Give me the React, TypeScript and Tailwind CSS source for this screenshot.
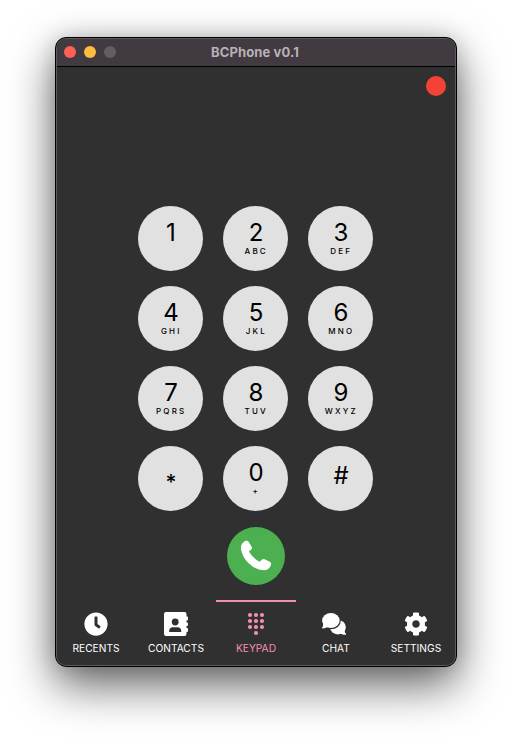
import type { ReactNode } from "react";
import { FaClock, FaCog } from "react-icons/fa";

type Key = { digit: string; letters: string; tone?: "symbol" | "star" };

const keys: Key[] = [
  { digit: "1", letters: "" },
  { digit: "2", letters: "ABC" },
  { digit: "3", letters: "DEF" },
  { digit: "4", letters: "GHI" },
  { digit: "5", letters: "JKL" },
  { digit: "6", letters: "MNO" },
  { digit: "7", letters: "PQRS" },
  { digit: "8", letters: "TUV" },
  { digit: "9", letters: "WXYZ" },
  { digit: "*", letters: "", tone: "star" },
  { digit: "0", letters: "+" },
  { digit: "#", letters: "", tone: "symbol" },
];

function DialKey({ digit, letters, tone }: Key) {
  const offset = tone === "star" ? "pt-[25px]" : tone === "symbol" ? "pt-[18px]" : "pt-[15px]";
  const size = tone === "star" ? "text-[21px] font-medium" : "text-[24px]";
  return (
    <button className={`flex h-[65px] w-[65px] flex-col items-center rounded-full bg-[#e1e1e1] text-black ${offset}`}>
      <span className={`pl-px leading-[24px] ${size}`}>{digit}</span>
      <span className="mt-px pl-[1.5px] text-[8px] leading-[10px] font-medium tracking-[2.2px]">{letters}</span>
    </button>
  );
}

function ContactBookIcon() {
  return (
    <svg viewBox="0 0 24 24" className="h-6 w-6" fill="currentColor">
      <path
        fillRule="evenodd"
        d="M2 0h18.500A2 2 0 0 1 22.500 2v2.500H23a1 1 0 0 1 1 1v2a1 1 0 0 1-1 1h-.5v2H23a1 1 0 0 1 1 1v1.500a1 1 0 0 1-1 1h-.5v2H23a1 1 0 0 1 1 1v2a1 1 0 0 1-1 1h-.5V22a2 2 0 0 1-2 2H2a2 2 0 0 1-2-2V2a2 2 0 0 1 2-2ZM11.200 6.600a3.400 3.400 0 1 0 0 6.800 3.400 3.400 0 0 0 0-6.800ZM5.200 19.900h12v-1.200c0-2-1.500-3.400-3.500-3.400h-5c-2 0-3.500 1.400-3.500 3.400Z"
      />
    </svg>
  );
}

function DialpadIcon() {
  return (
    <svg viewBox="0 0 24 24" className="h-6 w-6" fill="currentColor">
      {[3, 9, 15].map((y) => [6, 12, 18].map((x) => <circle key={`${x}-${y}`} cx={x} cy={y} r="2.1" />))}
      <circle cx="12" cy="21" r="2.1" />
    </svg>
  );
}

function ChatIcon() {
  return (
    <svg viewBox="0 0 24 24" className="mr-1 h-6 w-6" fill="currentColor">
      <ellipse cx="15.900" cy="15.200" rx="7.900" ry="7.200" />
      <path d="M22.800 17.500c-.3 2 .1 3.300 1.200 4.200v1.100c-2 .2-4-.2-5.500-1.200Z" />
      <ellipse cx="9" cy="8.600" rx="9.900" ry="8.700" fill="#303030" />
      <ellipse cx="8.900" cy="8.500" rx="8.800" ry="7.600" />
      <path d="M.9 11.200c.5 1.900.2 3.300-.9 4.400v.7c2 .3 3.900-.2 5.400-1.300Z" />
    </svg>
  );
}

function HandsetIcon() {
  return (
    <svg viewBox="0 0 32 32" className="h-8 w-8" fill="white">
      <path d="M4.800 1.200C6.700.2 8.200.8 9 2.400l2.800 4.700c.5 1 .3 1.700-.5 2.300L9 11.300c1.900 4.100 5.700 7.900 10.600 10.400l2.500-2.200c.8-.7 1.600-.7 2.500-.3l5.100 2.500c1.400.7 1.800 1.900 1.200 3.500-1.400 3.800-4.500 5.500-8.900 4.900C11.700 28.500 3 19.600 1.100 9.700.4 5.900 1.500 3 4.800 1.200Z" />
    </svg>
  );
}

function Tab({ label, icon, active }: { label: string; icon: ReactNode; active?: boolean }) {
  return (
    <button
      className={`flex h-[63px] w-20 flex-col items-center border-t-2 pt-[10px] ${
        active ? "border-[#f48fb1] text-[#f48fb1]" : "border-transparent text-white"
      }`}
    >
      {icon}
      <span className="mt-[5px] text-[10.2px] leading-[14px]">{label}</span>
    </button>
  );
}

export default function App() {
  return (
    <div className="h-[740px] w-[512px] overflow-hidden bg-white pt-[37px] pl-[55px] font-['Inter','Liberation_Sans',sans-serif]">
      <div className="h-[630px] w-[402px] rounded-[11px] shadow-[0_18px_46px_rgba(0,0,0,0.62),0_0_20px_rgba(0,0,0,0.15)]">
        <div className="h-full overflow-hidden rounded-[11px] border border-black bg-[#303030]">
          <div className="flex h-full flex-col overflow-hidden rounded-[10px] border border-[#5c5a5c]">
            <header className="-mx-px grid h-[28px] shrink-0 grid-cols-3 items-center border-b border-black bg-[#423a41] px-2 pb-px">
              <div className="flex gap-2">
                <span className="h-3 w-3 rounded-full bg-[#ff5f57]" />
                <span className="h-3 w-3 rounded-full bg-[#febc40]" />
                <span className="h-3 w-3 rounded-full bg-[#645c63]" />
              </div>
              <h1 className="pr-[2px] text-center text-[13px] leading-[24px] font-bold tracking-[0.1px] whitespace-nowrap text-[#b8b2b8]">
                BCPhone v0.1
              </h1>
            </header>
            <div className="flex h-[139px] shrink-0 justify-end pt-[9px] pr-[9px]">
              <span className="h-5 w-5 rounded-full bg-[#f44336]" />
            </div>
            <main className="flex flex-col items-center">
              <div className="grid grid-cols-3 gap-x-5 gap-y-[15px] pr-px">
                {keys.map((key) => (
                  <DialKey key={key.digit} {...key} />
                ))}
              </div>
              <button className="mt-[15.5px] flex h-[58.5px] w-[58.5px] items-center justify-center rounded-full bg-[#4caf50]">
                <HandsetIcon />
              </button>
            </main>
            <nav className="-mx-px mt-[15px] flex shrink-0">
              <Tab label="RECENTS" icon={<FaClock className="h-6 w-6" />} />
              <Tab label="CONTACTS" icon={<ContactBookIcon />} />
              <Tab label="KEYPAD" icon={<DialpadIcon />} active />
              <Tab label="CHAT" icon={<ChatIcon />} />
              <Tab label="SETTINGS" icon={<FaCog className="h-6 w-6" />} />
            </nav>
          </div>
        </div>
      </div>
    </div>
  );
}
